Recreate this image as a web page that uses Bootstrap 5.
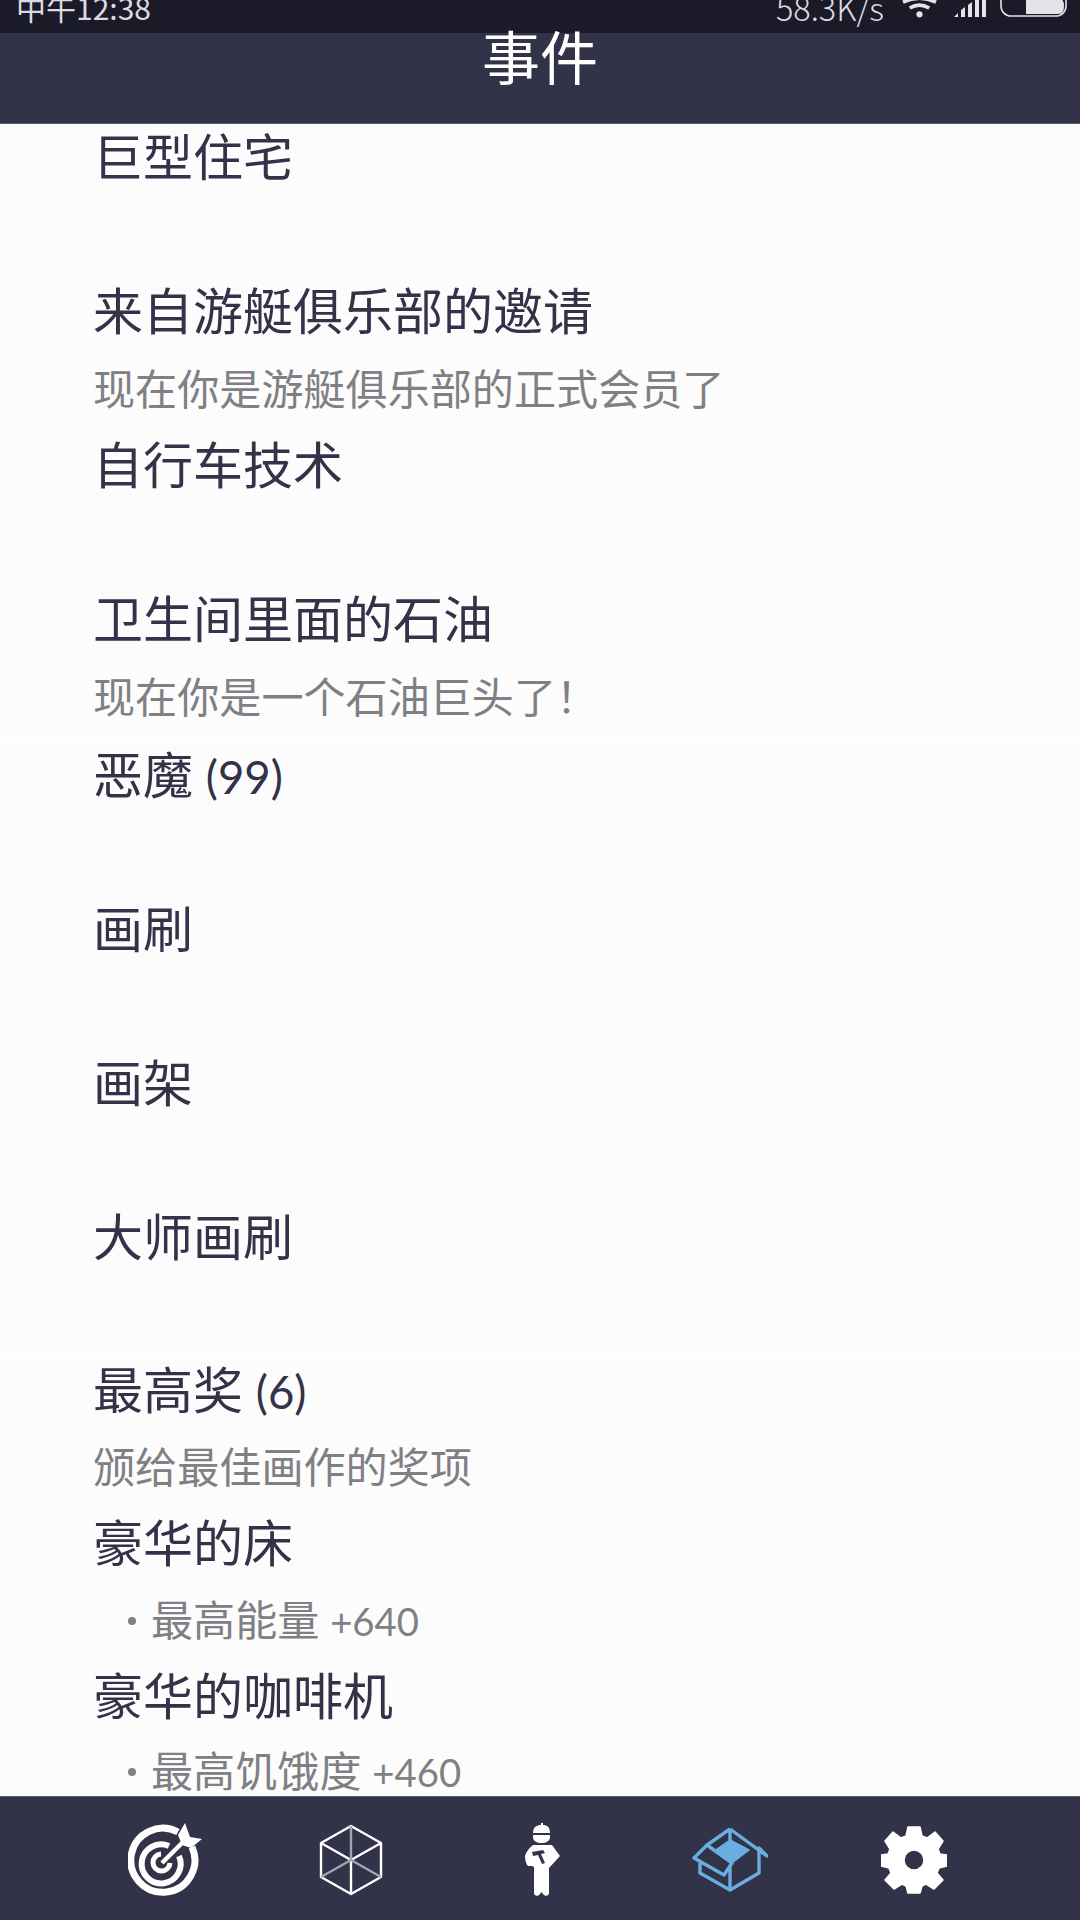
<!doctype html>
<html lang="zh">
<head>
<meta charset="utf-8">
<title>事件</title>
<link href="https://cdn.jsdelivr.net/npm/bootstrap@5.3.0/dist/css/bootstrap.min.css" rel="stylesheet">
<style>
html,body{height:1920px;overflow:hidden}
body{font-family:Lato,"Noto Sans CJK SC",sans-serif;background:#fcfcfd}
.app-shell{width:1080px;height:1920px}
.status-strip{height:33px;background:#1a1a28;color:#dcdce0;font-size:30px;line-height:14px;padding:0 12px 0 16px;overflow:hidden;font-family:"Noto Sans CJK SC",sans-serif;font-weight:400}
.status-strip svg{display:block}
.speed-text{font-size:32.500px;margin-right:18px;font-weight:300}
.wifi-mark{margin-right:16px}
.bars-mark{margin-right:13px}
.title-strip{height:91px;background:#323248;color:#fff;font-size:58px;line-height:50px;font-weight:400;text-align:center;border-bottom:1px solid #55556a}
.scroll-area{min-height:0;overflow:hidden;background:#fcfcfd}
.scroll-inner{margin-top:-5px}
.ev-group{position:relative}
.ev-group-first{padding-bottom:2px}
.ev-group-tight{margin-top:-1px}
.ev-group-tight::before,.ev-group-mid::before{content:"";position:absolute;left:0;right:0;top:3px;height:2px;background:#fff}
.ev-title,.ev-sub{height:77px;padding-left:93px}
.ev-title{font-size:50px;line-height:77px;color:#323248}
.ev-sub{font-size:42.100px;line-height:77px;color:#808084}
.ev-row-pull{margin-top:-1px}
.ev-row-pull-more{margin-top:-3px}
.ev-bullet{padding-left:128px}
.latin-run{font-size:.91em}
.dot-mark{display:inline-block;width:8px;height:8px;border-radius:50%;background:#808084;margin-right:15px;vertical-align:middle;margin-bottom:8px}
.tab-strip{height:124px;background:#323248;border-top:1px solid #55556a;padding:3px 69px 0}
.tab-cell{width:188px}
.nudge-target{margin-left:5px}
.nudge-right{margin-left:8px}
.nudge-box{margin-left:6px}
.nudge-left{margin-left:-2px}
</style>
</head>
<body>
<div class="app-shell d-flex flex-column">
  <div class="status-strip d-flex justify-content-between flex-shrink-0">
    <span>中午12:38</span>
    <div class="d-flex align-items-start">
      <span class="speed-text">58.3K/s</span>
      <svg class="wifi-mark" width="35" height="18" viewBox="0 0 36 18" fill="none" stroke="#e4e4e8" stroke-width="3.600"><path d="M1 2 Q18 -6 35 2M8 8 Q18 2 28 8"/><circle cx="18" cy="14.500" r="3.200" fill="#e4e4e8" stroke="none"/></svg>
      <svg class="bars-mark" width="34" height="18" viewBox="0 0 34 18" fill="#e4e4e8"><path d="M1 17 5 13V17ZM8 17V10L12 7V17ZM15 17V5L19 2V17ZM22 17V0H26V17ZM29 17V0H33V17Z"/></svg>
      <svg width="68" height="18" viewBox="0 0 68 18"><rect x="1" y="-12" width="65" height="28" rx="10" fill="none" stroke="#e4e4e8" stroke-width="1.600"/><path d="M26 -2H58Q64 -2 64 6Q64 14 58 14H26Z" fill="#e4e4e8"/></svg>
    </div>
  </div>
  <div class="title-strip flex-shrink-0">事件</div>
  <div class="scroll-area flex-grow-1">
    <div class="scroll-inner">
      <div class="ev-group ev-group-first">
        <div class="ev-title">巨型住宅</div><div class="ev-sub"></div>
        <div class="ev-title">来自游艇俱乐部的邀请</div><div class="ev-sub">现在你是游艇俱乐部的正式会员了</div>
        <div class="ev-title">自行车技术</div><div class="ev-sub"></div>
        <div class="ev-title">卫生间里面的石油</div><div class="ev-sub">现在你是一个石油巨头了！</div>
      </div>
      <div class="ev-group ev-group-mid">
        <div class="ev-title">恶魔 <span class="latin-run">(99)</span></div><div class="ev-sub"></div>
        <div class="ev-title">画刷</div><div class="ev-sub"></div>
        <div class="ev-title">画架</div><div class="ev-sub"></div>
        <div class="ev-title">大师画刷</div><div class="ev-sub"></div>
      </div>
      <div class="ev-group ev-group-tight">
        <div class="ev-title">最高奖 <span class="latin-run">(6)</span></div><div class="ev-sub ev-row-pull">颁给最佳画作的奖项</div>
        <div class="ev-title">豪华的床</div><div class="ev-sub ev-bullet ev-row-pull"><span class="dot-mark"></span>最高能量 <span class="latin-run">+640</span></div>
        <div class="ev-title">豪华的咖啡机</div><div class="ev-sub ev-bullet ev-row-pull-more"><span class="dot-mark"></span>最高饥饿度 <span class="latin-run">+460</span></div>
      </div>
    </div>
  </div>
  <nav class="tab-strip d-flex align-items-center flex-shrink-0">
    <div class="tab-cell d-flex justify-content-center">
      <svg class="nudge-target" width="76" height="74" viewBox="0 0 76 74" fill="none" stroke="#fff"><path d="M50 9A32 32 0 1 0 64 24" stroke-width="7"/><path d="M41 23A19.500 19.500 0 1 0 51 33" stroke-width="6"/><path d="M33 31A8.500 8.500 0 1 0 42 40" stroke-width="5"/><path d="M34 40 58 16" stroke-width="4.500"/><path d="M50 12 57 0 62 14 74 16 63 25 54 22Z" fill="#fff" stroke="none"/></svg>
    </div>
    <div class="tab-cell d-flex justify-content-center">
      <svg width="64" height="72" viewBox="0 0 64 72" fill="none" stroke="#fff" stroke-width="2.400" stroke-linejoin="round"><path d="M32 2 62 19V53L32 70 2 53V19ZM2 19 32 36 62 19M32 36V70"/><path d="M32 2V36M2 53 32 36 62 53" stroke="#a4a4b4"/></svg>
    </div>
    <div class="tab-cell d-flex justify-content-center">
      <svg class="nudge-right" width="36" height="74" viewBox="0 0 36 74" fill="#fff"><path d="M8 10C8 4 12 2 16 2V0H18V2C22 2 25 4 25 10ZM8 12H25V14C25 18 21 20 16.500 20S8 18 8 14Z"/><path d="M8 22H27L35 33 24 45V70C24 73 20 74 18 71L16.500 69 15 71C13 74 9 73 9 70V44L7 43 3 43C1 41 0 37 0 33 1 29 4 25 8 22Z"/><path d="M7 29 18 27 20 30 16 31 20 40 17 41 13 32 8 33Z" fill="#323248"/></svg>
    </div>
    <div class="tab-cell d-flex justify-content-center">
      <svg class="nudge-box" width="76" height="66" viewBox="0 0 76 66" fill="none" stroke="#6aaee0" stroke-width="3.400" stroke-linejoin="round"><path d="M38 2 15 18 2 31 32 48 40 36 15 18M38 2V13M38 2 75 29 67 21V46L38 63 8 46V36M38 63V38"/><path d="M22 24 38 13 57 23 40 36Z" fill="#6aaee0" stroke-width="1.500"/></svg>
    </div>
    <div class="tab-cell d-flex justify-content-center">
      <svg class="nudge-left" width="66" height="68" viewBox="-33 -34 66 68" fill="#fff"><path fill-rule="evenodd" stroke="#fff" stroke-width="1.500" stroke-linejoin="round" d="M-6 -33H6L8 -24 13 -22 21 -28 29 -19 24 -11 26 -6 33 -5V6L25 8 23 13 29 20 20 29 12 24 8 26 6 33H-6L-8 26-12 24-20 29-29 20-23 13-25 8-33 6V-5L-26 -6-24 -11-29 -19-21 -28-13 -22-8 -24ZM0 -10A10 10 0 1 0 0 10 10 10 0 1 0 0 -10Z"/></svg>
    </div>
  </nav>
</div>
<script src="https://cdn.jsdelivr.net/npm/bootstrap@5.3.0/dist/js/bootstrap.bundle.min.js"></script>
</body>
</html>
